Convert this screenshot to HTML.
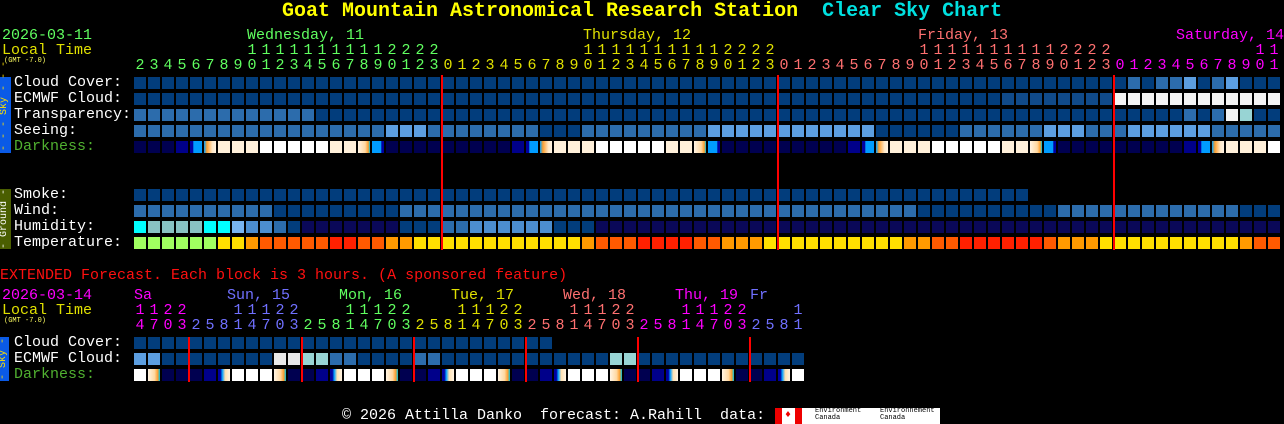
<!DOCTYPE html>
<html><head><meta charset="utf-8">
<style>
html,body{margin:0;padding:0;background:#000;width:1284px;height:424px;overflow:hidden;position:relative}
div{position:absolute;white-space:pre;font-family:"Liberation Mono",monospace;font-size:15px;line-height:16px}
.t{font-size:7px;line-height:8px}
</style></head><body>
<div style="left:282px;top:1px;font-size:20px;line-height:22px;font-weight:bold;color:#ffff00">Goat Mountain Astronomical Research Station  <span style="color:#00e0e0">Clear Sky Chart</span></div>
<div style="left:2px;top:28px;color:#60ff60">2026-03-11</div>
<div style="left:2px;top:43px;color:#e0e000">Local Time</div>
<div class="t" style="left:4px;top:57px;color:#ffff60">(GMT -7.0)</div>
<div style="left:247px;top:28px;color:#60ff60">Wednesday, 11</div>
<div style="left:583px;top:28px;color:#e0e000">Thursday, 12</div>
<div style="left:918px;top:28px;color:#ff7070">Friday, 13</div>
<div style="left:1176px;top:28px;color:#ff00ff">Saturday, 14</div>
<div style="left:14px;top:75px;color:#fff">Cloud Cover:</div>
<div style="left:14px;top:91px;color:#fff">ECMWF Cloud:</div>
<div style="left:14px;top:107px;color:#fff">Transparency:</div>
<div style="left:14px;top:123px;color:#fff">Seeing:</div>
<div style="left:14px;top:139px;color:#50b030">Darkness:</div>
<div style="left:14px;top:187px;color:#fff">Smoke:</div>
<div style="left:14px;top:203px;color:#fff">Wind:</div>
<div style="left:14px;top:219px;color:#fff">Humidity:</div>
<div style="left:14px;top:235px;color:#fff">Temperature:</div>
<div style="left:0;top:77px;width:11px;height:76px;background:#0a5ae6"></div>
<div style="left:0;top:189px;width:11px;height:60px;background:#4a5e00"></div>
<div style="left:0;top:337px;width:9px;height:44px;background:#0a5ae6"></div>
<div style="left:-31px;top:109px;width:72px;font-size:10px;line-height:12px;color:#ffe000;transform:rotate(-90deg);text-align:center">- - - Sky - - -</div>
<div style="left:-25px;top:213px;width:60px;font-size:10px;line-height:12px;color:#ffffff;transform:rotate(-90deg);text-align:center">- Ground -</div>
<div style="left:-18px;top:353px;width:44px;font-size:10px;line-height:12px;color:#ffe000;transform:rotate(-90deg);text-align:center">- Sky -</div>

<div style="left:0;top:268px;color:#ff1010">EXTENDED Forecast. Each block is 3 hours. (A sponsored feature)</div>
<div style="left:2px;top:288px;color:#ff00ff">2026-03-14</div>
<div style="left:2px;top:303px;color:#e0e000">Local Time</div>
<div class="t" style="left:4px;top:317px;color:#ffff60">(GMT -7.0)</div>
<div style="left:134px;top:288px;color:#ff00ff">Sa</div>
<div style="left:227px;top:288px;color:#7070ff">Sun, 15</div>
<div style="left:339px;top:288px;color:#60ff60">Mon, 16</div>
<div style="left:451px;top:288px;color:#e0e000">Tue, 17</div>
<div style="left:563px;top:288px;color:#ff7070">Wed, 18</div>
<div style="left:675px;top:288px;color:#ff00ff">Thu, 19</div>
<div style="left:750px;top:288px;color:#7070ff">Fr</div>
<div style="left:14px;top:335px;color:#fff">Cloud Cover:</div>
<div style="left:14px;top:351px;color:#fff">ECMWF Cloud:</div>
<div style="left:14px;top:367px;color:#50b030">Darkness:</div>

<div style="left:342px;top:408px;color:#fff">© 2026 Attilla Danko  forecast: A.Rahill  data:</div>
<div style="left:775px;top:408px;width:27px;height:16px;background:#fff"></div>
<div style="left:775px;top:408px;width:7px;height:16px;background:#e00"></div>
<div style="left:795px;top:408px;width:7px;height:16px;background:#e00"></div>
<div style="left:785px;top:411px;color:#e00;font-size:10px;line-height:10px">♦</div>
<div style="left:802px;top:408px;width:138px;height:16px;background:#fff"></div>
<div style="left:815px;top:408px;font-size:7px;line-height:7px;color:#000">Environment
Canada</div>
<div style="left:880px;top:408px;font-size:7px;line-height:7px;color:#000">Environnement
Canada</div>
<script>
var g=document.body;
function d(x,y,w,h,c){var e=document.createElement('div');e.style.cssText='left:'+x+'px;top:'+y+'px;width:'+w+'px;height:'+h+'px;background:'+c;g.appendChild(e);return e;}
function txt(x,y,s,c){var e=document.createElement('div');e.style.cssText='left:'+x+'px;top:'+y+'px;color:'+c+';width:14px;text-align:center';e.textContent=s;g.appendChild(e);}
var P={D:'#023d7c',E:'#104a8a',M:'#2c6cac',L:'#5c9ee0',W:'#f4f4f4',T:'#98d4d4',a:'#00ffff',g:'#88c2c2',h:'#78b4f0',p:'#4c8ed0',v:'#0a0858',G:'#a0ff60',Y:'#ffdf00',O:'#ff9a00',R:'#ff5a00',r:'#ff2000',n:'#000050',N:'#00008a',c:'#009cff',w:'#ffffff',y:'#fff0da',o:'#ffd8a0',X:'#e8e8e8'};
function rep(c,n){return Array(n+1).join(c);}
var rows={
77:rep('D',70)+'DMDMMLDMLDDD',
93:rep('D',62)+rep('E',8)+rep('W',12),
109:rep('M',13)+rep('D',57)+'DDDDDMDMWTDD',
125:rep('M',18)+'LLLM'+'MMMMMMMDDDMMMMMMMMMLLLLLLLLLLL'+'LDDDDDDMMMMMMLLLMM'+'MLLLLLLMMMMM',
189:rep('D',64),
205:rep('M',10)+rep('D',9)+'MMM'+rep('M',30)+'MMMM'+rep('D',10)+rep('M',13)+'DDD',
221:'aggggaahppMD'+rep('v',7)+'DDD'+'MMppppppDDD'+rep('v',49),
237:'GGGGGGYYORRRRRrrRROOYY'+'YYYYYYYYYYORRRrrrrRROOOY'+'YYYYYYYYYOORRrrrrrrROOOY'+'YYYYYYYYYORR'
};
for(var y in rows){var s=rows[y];for(var i=0;i<s.length;i++)d(134+i*14,+y,12,12,P[s[i]]);}
var pat='nnnnnNcoyyywwwwwyyocnnnn';
for(var i=0;i<82;i++){var h=(i+2)%24,ch=pat[h],x=134+i*14,e;
 if(ch=='o'){e=d(x,141,12,12,'');e.style.background=h<12?'linear-gradient(90deg,#00a0ff 0,#ffa030 25%,#ffe8c8 70%,#fff4e4)':'linear-gradient(90deg,#fff4e4,#ffd8a0 60%,#ffa030 85%,#00c0e0)';}
 else if(ch=='c'){e=d(x,141,12,12,'');e.style.background=h<12?'linear-gradient(90deg,#0000a0 25%,#009cff 30%)':'linear-gradient(90deg,#009cff 75%,#0000a0 80%)';}
 else d(x,141,12,12,P[ch]);}
var cols=['#60ff60','#e0e000','#ff7070','#ff00ff'];
for(var i=0;i<82;i++){var h=(i+2)%24,dd=i<22?0:i<46?1:i<70?2:3,c=cols[dd];
 txt(134+i*14-1,58,String(h%10),c); if(h>=10)txt(134+i*14-1,43,String(Math.floor(h/10)),c);}
[442,778,1114].forEach(function(x){d(x-1,75,2,175,'#ff0000');});
var ec=['#ff00ff','#7070ff','#60ff60','#e0e000','#ff7070','#ff00ff','#7070ff'];
for(var i=0;i<48;i++){var h=(14+i*3)%24,dd=i<4?0:Math.floor((i-4)/8)+1,c=ec[dd];
 txt(134+i*14-1,318,String(h%10),c); if(h>=10)txt(134+i*14-1,303,String(Math.floor(h/10)),c);}
for(var i=0;i<30;i++)d(134+i*14,337,12,12,P.D);
var e2='LLDDDDDDDDXXTTMMDDDDMMDDDDDDDDDDDDTTDDDDDDDDDDDD';
for(var i=0;i<48;i++)d(134+i*14,353,12,12,P[e2[i]]);
for(var i=0;i<48;i++){var k=(i+4)%8,ch='nNcwwwon'[k];if(i<4)ch='wonn'[i];var x=134+i*14,e;
 if(ch=='o'){e=d(x,369,12,12,'');e.style.background='linear-gradient(90deg,#fff4e4,#ffd8a0 55%,#ffa030 80%,#00c0e0)';}
 else if(ch=='c'){e=d(x,369,12,12,'');e.style.background='linear-gradient(90deg,#0000a0 20%,#009cff 35%,#ffe0b0 60%,#fff4e4)';}
 else d(x,369,12,12,P[ch]);}
[189,302,414,526,638,750].forEach(function(x){d(x-1,337,2,45,'#ff0000');});
</script>
</body></html>
